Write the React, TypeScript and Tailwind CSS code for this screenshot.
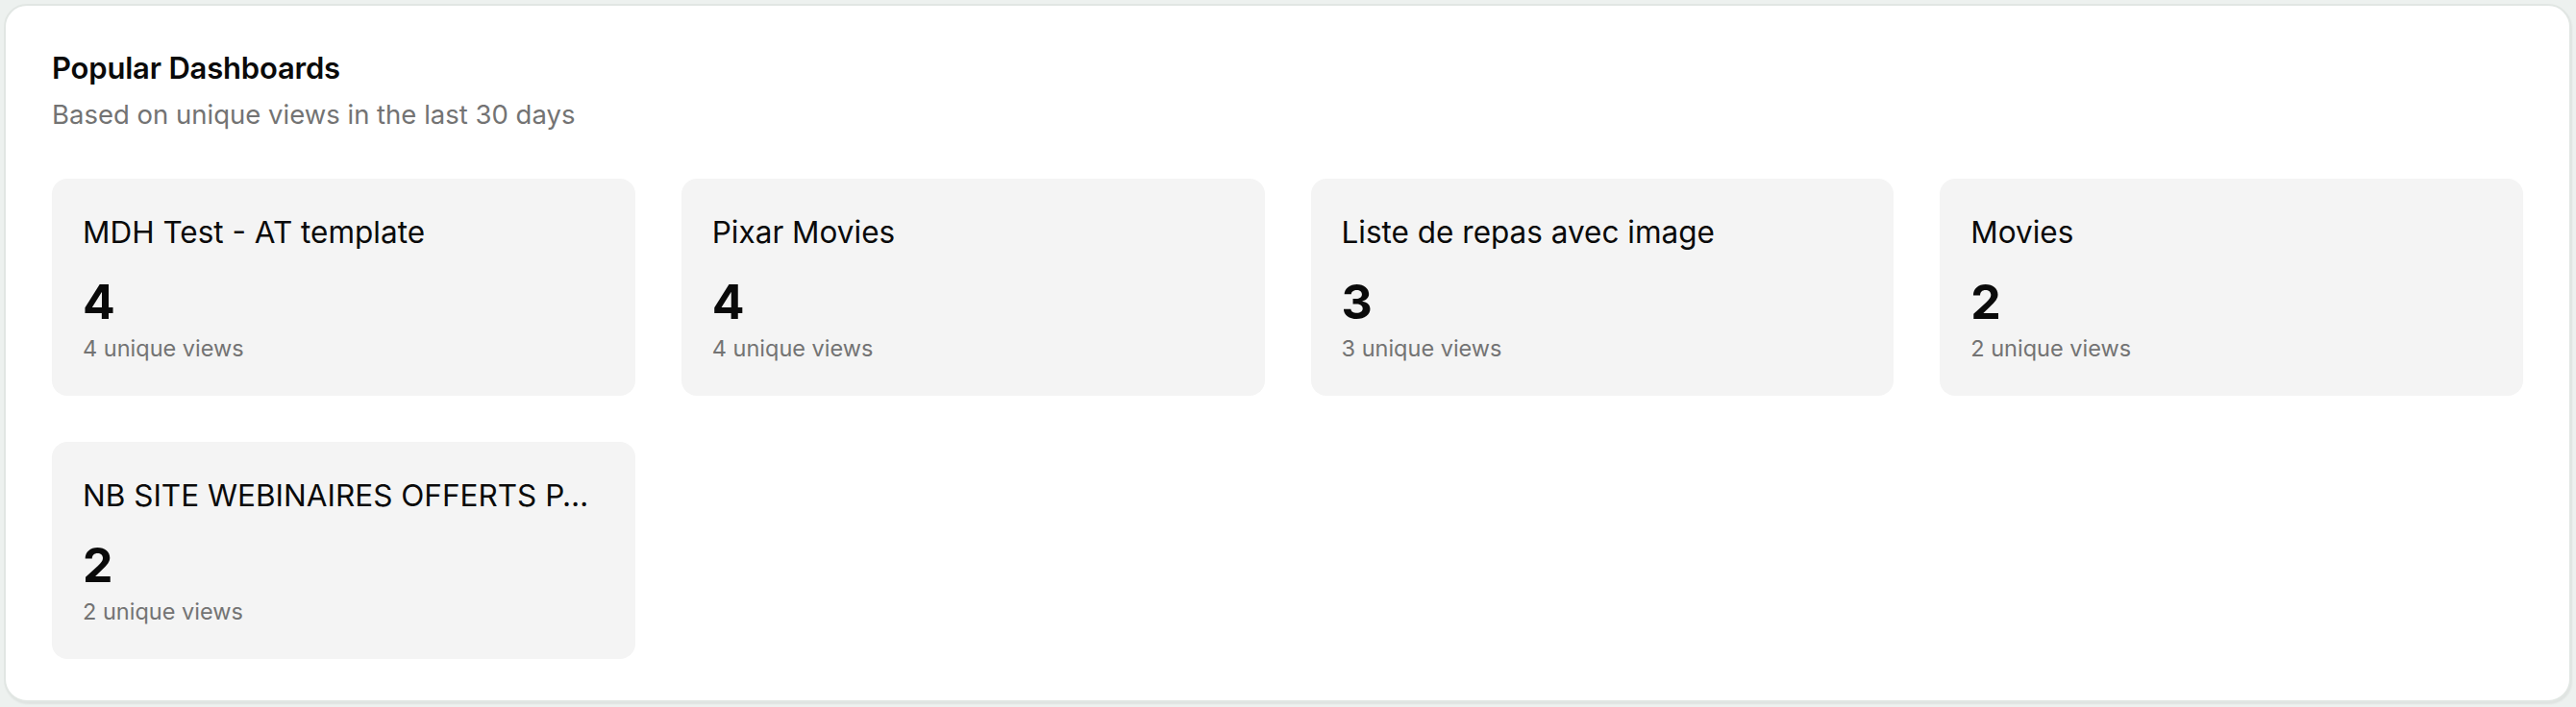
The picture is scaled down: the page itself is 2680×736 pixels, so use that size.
import React from "react";

const items = [
  { name: "MDH Test - AT template", views: 4 },
  { name: "Pixar Movies", views: 4 },
  { name: "Liste de repas avec image", views: 3 },
  { name: "Movies", views: 2 },
  { name: "NB SITE WEBINAIRES OFFERTS PAR MOIS 2024", views: 2 },
];

export default function App() {
  return (
    <div
      className="w-[2680px] h-[736px] bg-[#edf1ef] p-[4px] pr-[5px]"
      style={{ fontFamily: "Inter, 'Noto Sans', sans-serif" }}
    >
      <div className="h-[727px] bg-white rounded-[24px] border-2 border-[#e1e6e3] shadow-[1px_2px_2px_rgba(0,0,0,0.06)] px-[48px] pt-[45px] pb-[48px]">
        <div className="flex flex-col">
          <h2 className="text-[31px] leading-[40px] font-semibold text-[#0a0a0a] tracking-[-0.2px]">
            Popular Dashboards
          </h2>
          <p className="mt-[8px] text-[27.5px] leading-[40px] text-[#737373]">
            Based on unique views in the last 30 days
          </p>
        </div>
        <div className="mt-[47px] grid grid-cols-4 gap-[48px]">
          {items.map((it) => (
            <div
              key={it.name}
              className="bg-[#f4f4f4] rounded-[16px] p-[32px] pb-[33px] min-w-0"
            >
              <div className="text-[31.5px] leading-[48px] text-[#0a0a0a] truncate">
                {it.name}
              </div>
              <div className="mt-[16px] text-[50px] leading-[64px] font-bold text-[#0a0a0a]">
                {it.views}
              </div>
              <div className="mt-[1px] text-[23.5px] leading-[32px] text-[#737373]">
                {it.views} unique views
              </div>
            </div>
          ))}
        </div>
      </div>
    </div>
  );
}
